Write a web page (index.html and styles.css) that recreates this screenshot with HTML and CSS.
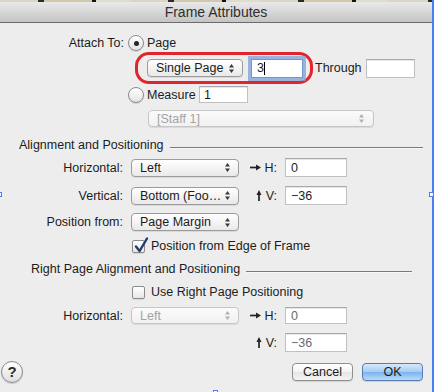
FILE: index.html
```html
<!DOCTYPE html>
<html lang="en">
<head>
  <meta charset="UTF-8" />
  <title>Frame Attributes</title>
  <link rel="stylesheet" href="styles.css">
</head>
<body>
  <div class="screen">
    <div class="desk"></div>
    <div class="titlebar">Frame Attributes</div>

    <div class="content">
      <div class="row r-attach">
        <span class="lbl lbl-attach">Attach To:</span>
        <span class="radio on"></span>
        <span class="opt">Page</span>
      </div>

      <div class="row r-range">
        <div class="ring">
          <div class="popup w-single">
            <span>Single Page</span>
            <svg class="updown" width="7" height="11" viewBox="0 0 7 11"><path d="M1 4.5 L3.5 1 L6 4.5 Z M1 6.5 L3.5 10 L6 6.5 Z"/></svg>
          </div>
          <div class="field focus w-page"><span>3</span><i class="caret"></i></div>
        </div>
        <span class="through">Through</span>
        <div class="field w-through"></div>
      </div>

      <div class="row r-measure">
        <span class="radio"></span>
        <span class="opt measure">Measure</span>
        <div class="field w-measure"><span>1</span></div>
      </div>

      <div class="row r-staff">
        <div class="popup disabled w-staff">
          <span>[Staff 1]</span>
          <svg class="updown" width="7" height="11" viewBox="0 0 7 11"><path d="M1 4.5 L3.5 1 L6 4.5 Z M1 6.5 L3.5 10 L6 6.5 Z"/></svg>
        </div>
      </div>

      <div class="head head-1">Alignment and Positioning</div>

      <div class="row r-h1">
        <span class="lbl">Horizontal:</span>
        <div class="popup w-align">
          <span>Left</span>
          <svg class="updown" width="7" height="11" viewBox="0 0 7 11"><path d="M1 4.5 L3.5 1 L6 4.5 Z M1 6.5 L3.5 10 L6 6.5 Z"/></svg>
        </div>
        <span class="axis">
          <svg width="11" height="7" viewBox="0 0 11 7"><path d="M0 3.5 H7" stroke="#222" stroke-width="1.7"/><path d="M6 0.5 L11 3.5 L6 6.5 Z" fill="#222"/></svg>
          H:
        </span>
        <div class="field w-num"><span>0</span></div>
      </div>

      <div class="row r-v1">
        <span class="lbl">Vertical:</span>
        <div class="popup w-align">
          <span>Bottom (Foo…</span>
          <svg class="updown" width="7" height="11" viewBox="0 0 7 11"><path d="M1 4.5 L3.5 1 L6 4.5 Z M1 6.5 L3.5 10 L6 6.5 Z"/></svg>
        </div>
        <span class="axis">
          <svg width="6" height="11" viewBox="0 0 6 11"><path d="M3 11 V4" stroke="#222" stroke-width="1.7"/><path d="M0.5 5 L3 0 L5.5 5 Z" fill="#222"/></svg>
          V:
        </span>
        <div class="field w-num"><span>−36</span></div>
      </div>

      <div class="row r-pos">
        <span class="lbl">Position from:</span>
        <div class="popup w-align">
          <span>Page Margin</span>
          <svg class="updown" width="7" height="11" viewBox="0 0 7 11"><path d="M1 4.5 L3.5 1 L6 4.5 Z M1 6.5 L3.5 10 L6 6.5 Z"/></svg>
        </div>
      </div>

      <div class="row r-cb1">
        <span class="check on">
          <svg width="16" height="17" viewBox="0 0 16 17"><path d="M3 9.5 L6.6 14 L14 1.5" fill="none" stroke="#233c6b" stroke-width="2.4" stroke-linecap="round" stroke-linejoin="round"/></svg>
        </span>
        <span class="opt">Position from Edge of Frame</span>
      </div>

      <div class="head head-2">Right Page Alignment and Positioning</div>

      <div class="row r-cb2">
        <span class="check"></span>
        <span class="opt">Use Right Page Positioning</span>
      </div>

      <div class="row r-h2">
        <span class="lbl">Horizontal:</span>
        <div class="popup disabled w-align">
          <span>Left</span>
          <svg class="updown" width="7" height="11" viewBox="0 0 7 11"><path d="M1 4.5 L3.5 1 L6 4.5 Z M1 6.5 L3.5 10 L6 6.5 Z"/></svg>
        </div>
        <span class="axis">
          <svg width="11" height="7" viewBox="0 0 11 7"><path d="M0 3.5 H7" stroke="#222" stroke-width="1.7"/><path d="M6 0.5 L11 3.5 L6 6.5 Z" fill="#222"/></svg>
          H:
        </span>
        <div class="field dim w-num"><span>0</span></div>
      </div>

      <div class="row r-v2">
        <span class="lbl"></span>
        <span class="spacer-popup"></span>
        <span class="axis">
          <svg width="6" height="11" viewBox="0 0 6 11"><path d="M3 11 V4" stroke="#222" stroke-width="1.7"/><path d="M0.5 5 L3 0 L5.5 5 Z" fill="#222"/></svg>
          V:
        </span>
        <div class="field dim w-num tall"><span>−36</span></div>
      </div>

      <div class="row footer">
        <span class="help">?</span>
        <span class="btn cancel">Cancel</span>
        <span class="btn ok">OK</span>
      </div>
    </div>

    <!-- frame handles from the document behind the dialog -->
    <span class="handle h-left"></span>
    <span class="handle h-right"></span>
    <span class="handle h-bottom"></span>
  </div>
</body>
</html>
```

FILE: styles.css
```css
* {
  box-sizing: border-box;
  margin: 0;
  padding: 0;
}

body {
  width: 434px;
  height: 392px;
  overflow: hidden;
  background: #ededed;
  color: #1c1c1c;
  font-family: "Liberation Sans", Arial, sans-serif;
  font-size: 12.5px;
}

.screen {
  position: relative;
  width: 434px;
  height: 392px;
  background: #ededed;
  border-right: 2px solid #4a7cf3;
}

.desk {
  height: 2px;
  background: repeating-linear-gradient(90deg, #dad6c3 0 38px, #2b2a22 38px 44px, #cfc9ae 44px 92px, #121212 92px 96px, #e0dccb 96px 130px);
}

.titlebar {
  height: 21px;
  background: linear-gradient(#e9e9e9, #c5c5c5);
  border-bottom: 1px solid #6c6c6c;
  text-align: center;
  line-height: 20px;
  font-size: 14px;
  color: #2e2e2e;
}

.row {
  display: flex;
  align-items: center;
}

.lbl {
  flex: none;
  width: 123px;
  margin-right: 8px;
  text-align: right;
}

.lbl-attach {
  width: 124px;
  margin-right: 4px;
}

.opt {
  margin-left: 3px;
  white-space: nowrap;
}

/* row placement */
.r-attach { margin-top: 12px; height: 16px; }
.r-range { margin-top: 1px; height: 32px; padding-left: 135px; }
.r-measure { margin-top: 2px; height: 17px; padding-left: 128px; }
.r-staff { margin-top: 7px; height: 17px; padding-left: 148px; }
.head-1 { margin-top: 10px; padding: 0 9px 0 19px; }
.r-h1 { margin-top: 5px; height: 19px; }
.r-v1 { margin-top: 9px; height: 19px; }
.r-pos { margin-top: 8px; height: 18px; }
.r-cb1 { margin-top: 8px; height: 14px; padding-left: 132px; }
.head-2 { margin-top: 8px; padding: 0 20px 0 31px; }
.r-cb2 { margin-top: 8px; height: 14px; padding-left: 132px; }
.r-h2 { margin-top: 8px; height: 17px; }
.r-v2 { margin-top: 9px; height: 19px; }

.head {
  display: flex;
  align-items: center;
  height: 16px;
  white-space: nowrap;
}

.head::after {
  content: "";
  flex: 1;
  height: 1px;
  margin: 4px 0 0 6px;
  background: #7a7a7a;
  box-shadow: 0 1px 0 #f8f8f8;
}

/* radio buttons and checkboxes */
.radio {
  flex: none;
  position: relative;
  width: 16px;
  height: 16px;
  border: 1px solid #8a8a8a;
  border-radius: 50%;
  background: linear-gradient(#ffffff, #e4e4e4);
  box-shadow: 0 1px 1px rgba(0, 0, 0, 0.12);
}

.radio.on::after {
  content: "";
  position: absolute;
  left: 4.5px;
  top: 4.5px;
  width: 5px;
  height: 5px;
  border-radius: 50%;
  background: #262626;
}

.check {
  flex: none;
  position: relative;
  width: 13px;
  height: 13px;
  margin-right: 3px;
  border: 1px solid #8c8c8c;
  border-radius: 2px;
  background: linear-gradient(#ffffff, #e6e6e6);
  box-shadow: 0 1px 1px rgba(0, 0, 0, 0.1);
}

.check svg {
  position: absolute;
  left: 0;
  top: -4px;
}

/* pop-up buttons */
.popup {
  flex: none;
  display: flex;
  align-items: center;
  justify-content: space-between;
  height: 18px;
  padding: 0 7px 0 8px;
  border: 1px solid #9b9b9b;
  border-radius: 4px;
  background: linear-gradient(#ffffff, #f4f4f4 50%, #e9e9e9);
  box-shadow: 0 1px 0 rgba(0, 0, 0, 0.08);
  white-space: nowrap;
}

.popup .updown {
  fill: #3a3a3a;
}

.popup.disabled {
  height: 17px;
  color: #a3a3a3;
  border-color: #c6c6c6;
  background: linear-gradient(#fbfbfb, #f1f1f1);
}

.popup.disabled .updown {
  fill: #b0b0b0;
}

.w-single { width: 96px; }
.w-staff { width: 226px; padding-right: 8px; }
.w-align { width: 108px; }

.spacer-popup {
  flex: none;
  width: 108px;
}

/* text fields */
.field {
  flex: none;
  display: flex;
  align-items: center;
  height: 19px;
  padding-left: 5px;
  background: #fff;
  border: 1px solid #c0c0c0;
  border-top-color: #a9a9a9;
  box-shadow: inset 0 1px 0 #e6e6e6;
}

.field.dim {
  color: #6a6a6a;
  height: 17px;
}

.field.dim.tall {
  height: 19px;
}

.field.focus {
  border-color: #6e97cc;
  box-shadow: 0 0 0 3px rgba(120, 160, 215, 0.75);
}

.caret {
  display: block;
  width: 1px;
  height: 13px;
  background: #000;
}

.ring {
  flex: none;
  display: flex;
  align-items: center;
  width: 178px;
  height: 32px;
  padding-left: 9px;
  border: 3px solid #e2242c;
  border-radius: 14px;
}

.w-page { width: 52px; margin-left: 8px; }

.through {
  flex: none;
  width: 53px;
  padding-left: 2px;
}

.w-through { width: 49px; }

.measure {
  flex: none;
  width: 52px;
}

.w-measure { width: 49px; height: 17px; padding-left: 4px; }

.axis {
  flex: none;
  display: flex;
  align-items: center;
  justify-content: flex-end;
  gap: 4px;
  width: 46px;
  padding-right: 8px;
}

.w-num { width: 62px; }

/* bottom buttons */
.footer {
  margin-top: 9px;
  height: 22px;
  padding: 0 9px 0 1px;
}

.help {
  flex: none;
  width: 22px;
  height: 22px;
  margin-right: auto;
  border: 1px solid #8a8a8a;
  border-radius: 50%;
  background: linear-gradient(#ffffff, #dedede);
  box-shadow: 0 1px 1px rgba(0, 0, 0, 0.15);
  text-align: center;
  line-height: 20px;
  font-size: 15px;
  font-weight: bold;
  color: #2a2a2a;
}

.btn {
  flex: none;
  width: 61px;
  height: 18px;
  border-radius: 4px;
  text-align: center;
  line-height: 16px;
}

.cancel {
  border: 1px solid #8f8f8f;
  background: linear-gradient(#ffffff, #f3f3f3 50%, #e6e6e6 51%, #f4f4f4);
  box-shadow: 0 1px 0 rgba(0, 0, 0, 0.1);
}

.ok {
  margin-left: 9px;
  border: 1px solid #5a7db1;
  background: linear-gradient(#d7e9fc, #a3cbf3 50%, #7bb3ec 51%, #b8dbfa);
  box-shadow: 0 1px 0 rgba(0, 0, 0, 0.12);
}

/* selection handles of the score frame behind */
.handle {
  position: absolute;
  border: 1px solid #4a7cf3;
  background: #fff;
}

.h-left {
  left: -3px;
  top: 192px;
  width: 5px;
  height: 5px;
}

.h-right {
  right: -2px;
  top: 192px;
  width: 5px;
  height: 5px;
}

.h-bottom {
  left: 213px;
  bottom: -3px;
  width: 5px;
  height: 5px;
}
```
